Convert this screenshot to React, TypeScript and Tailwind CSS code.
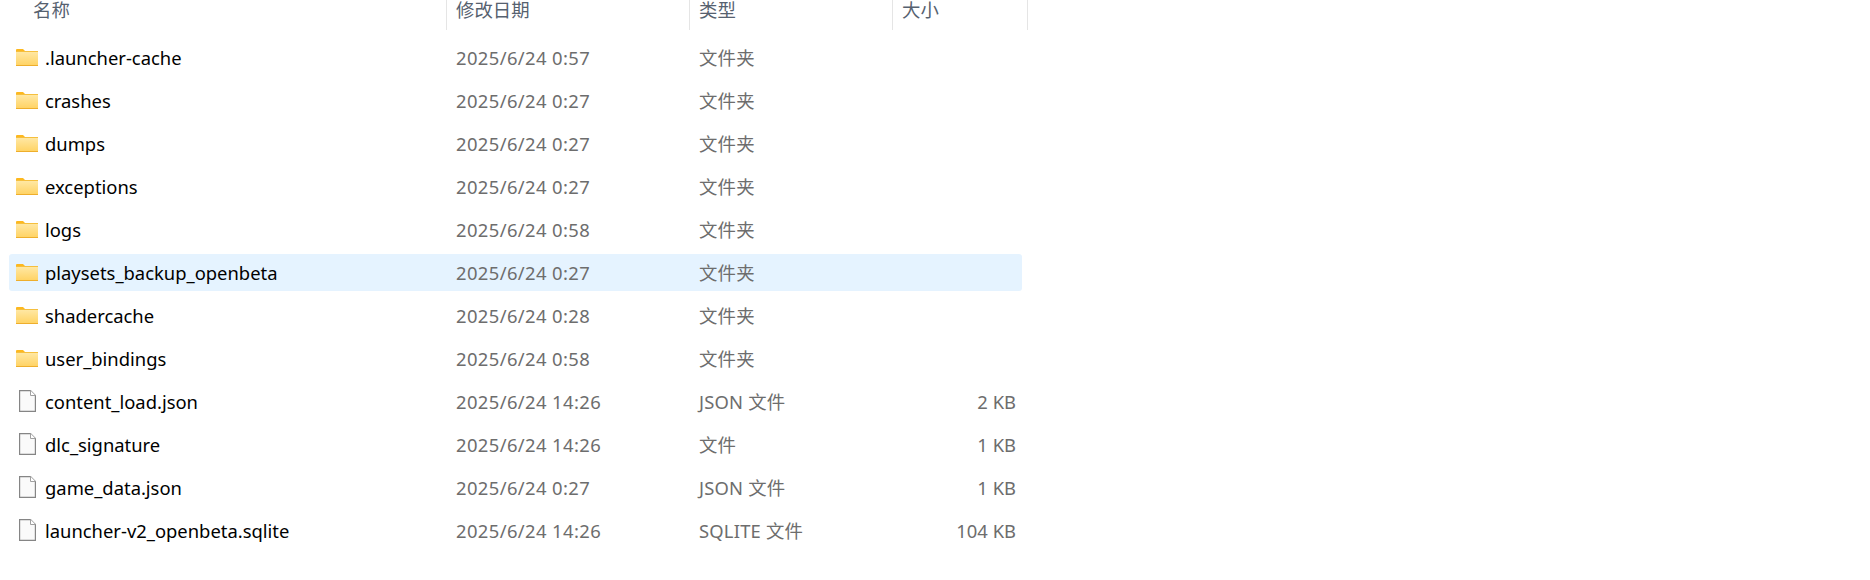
const rows = [
  { n: ".launcher-cache", d: "2025/6/24 0:57", t: "文件夹", s: "", f: true },
  { n: "crashes", d: "2025/6/24 0:27", t: "文件夹", s: "", f: true },
  { n: "dumps", d: "2025/6/24 0:27", t: "文件夹", s: "", f: true },
  { n: "exceptions", d: "2025/6/24 0:27", t: "文件夹", s: "", f: true },
  { n: "logs", d: "2025/6/24 0:58", t: "文件夹", s: "", f: true },
  { n: "playsets_backup_openbeta", d: "2025/6/24 0:27", t: "文件夹", s: "", f: true, sel: true },
  { n: "shadercache", d: "2025/6/24 0:28", t: "文件夹", s: "", f: true },
  { n: "user_bindings", d: "2025/6/24 0:58", t: "文件夹", s: "", f: true },
  { n: "content_load.json", d: "2025/6/24 14:26", t: "JSON 文件", s: "2 KB", f: false },
  { n: "dlc_signature", d: "2025/6/24 14:26", t: "文件", s: "1 KB", f: false },
  { n: "game_data.json", d: "2025/6/24 0:27", t: "JSON 文件", s: "1 KB", f: false },
  { n: "launcher-v2_openbeta.sqlite", d: "2025/6/24 14:26", t: "SQLITE 文件", s: "104 KB", f: false },
];

function FolderIcon() {
  return (
    <svg width="22" height="17" viewBox="0 0 22 17" className="shrink-0">
      <defs>
        <linearGradient id="fg" x1="0" y1="0" x2="0" y2="1">
          <stop offset="0" stopColor="#ffe9a8" />
          <stop offset="1" stopColor="#ffd261" />
        </linearGradient>
      </defs>
      <path d="M0 1Q0 0 1 0H7L9 2V5H0Z" fill="#fdb81f" />
      <rect x="0" y="2" width="22" height="15" fill="url(#fg)" />
      <rect x="0" y="16" width="22" height="1" fill="#eeae2c" />
      <rect x="0" y="2" width="22" height="1" fill="#f5bf3e" />
    </svg>
  );
}

function FileIcon() {
  return (
    <svg width="17" height="22" viewBox="0 0 17 22" className="shrink-0">
      <path d="M0.6 0.6H11.5L16.4 5.5V21.4H0.6Z" fill="#fafafa" stroke="#858585" strokeWidth="1.2" />
      <path d="M11.5 0.6V5.5H16.4" fill="#fff" stroke="#a0a0a0" strokeWidth="1" />
    </svg>
  );
}

const font = "font-['Noto_Sans','Noto_Sans_CJK_SC',sans-serif]";

export default function App() {
  return (
    <div className={`w-[1870px] h-[580px] bg-white overflow-hidden ${font} text-[18.4px]`}>
      <div className="flex h-[30px] w-[1028px] text-[#56616f] leading-[20px]">
        <div className="w-[447px] pl-[33px] border-r border-[#e5e5e5]">名称</div>
        <div className="w-[243px] pl-[9px] border-r border-[#e5e5e5]">修改日期</div>
        <div className="w-[203px] pl-[9px] border-r border-[#e5e5e5]">类型</div>
        <div className="w-[135px] pl-[9px] border-r border-[#e5e5e5]">大小</div>
      </div>
      <div className="mt-[6px] ml-[9px] w-[1013px]">
        {rows.map((r) => (
          <div key={r.n} className="flex items-center h-[43px]">
            <div className={`flex items-center w-full h-[37px] rounded-[3px] pr-[6px] ${r.sel ? "bg-[#e5f3ff]" : ""}`}>
              <div className="w-[447px] flex items-center">
                <div className="w-[36px] flex justify-center">
                  {r.f ? <FolderIcon /> : <FileIcon />}
                </div>
                <span className="text-black">{r.n}</span>
              </div>
              <div className="w-[243px] text-[#6d6d6d] tracking-[0.4px]">{r.d}</div>
              <div className="w-[200px] text-[#6d6d6d] tracking-[0.2px]">{r.t}</div>
              <div className="flex-1 text-right text-[#6d6d6d]">{r.s}</div>
            </div>
          </div>
        ))}
      </div>
    </div>
  );
}
